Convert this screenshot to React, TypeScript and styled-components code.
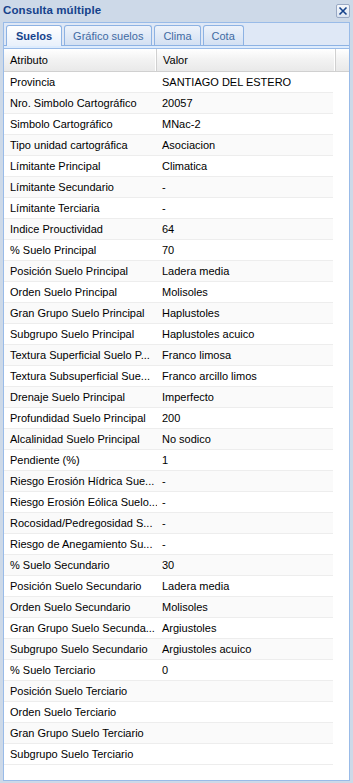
import React, { useState } from "react";
import styled, { createGlobalStyle } from "styled-components";

const GlobalStyle = createGlobalStyle`
  html, body {
    margin: 0;
    padding: 0;
    background: #cdd9e8;
  }
  body {
    font-family: "Liberation Sans", Arial, sans-serif;
  }
`;

const rows: [string, string][] = [
  ["Provincia", "SANTIAGO DEL ESTERO"],
  ["Nro. Simbolo Cartográfico", "20057"],
  ["Simbolo Cartográfico", "MNac-2"],
  ["Tipo unidad cartográfica", "Asociacion"],
  ["Límitante Principal", "Climatica"],
  ["Límitante Secundario", "-"],
  ["Límitante Terciaria", "-"],
  ["Indice Prouctividad", "64"],
  ["% Suelo Principal", "70"],
  ["Posición Suelo Principal", "Ladera media"],
  ["Orden Suelo Principal", "Molisoles"],
  ["Gran Grupo Suelo Principal", "Haplustoles"],
  ["Subgrupo Suelo Principal", "Haplustoles acuico"],
  ["Textura Superficial Suelo P...", "Franco limosa"],
  ["Textura Subsuperficial Sue...", "Franco arcillo limos"],
  ["Drenaje Suelo Principal", "Imperfecto"],
  ["Profundidad Suelo Principal", "200"],
  ["Alcalinidad Suelo Principal", "No sodico"],
  ["Pendiente (%)", "1"],
  ["Riesgo Erosión Hídrica Sue...", "-"],
  ["Riesgo Erosión Eólica Suelo...", "-"],
  ["Rocosidad/Pedregosidad S...", "-"],
  ["Riesgo de Anegamiento Su...", "-"],
  ["% Suelo Secundario", "30"],
  ["Posición Suelo Secundario", "Ladera media"],
  ["Orden Suelo Secundario", "Molisoles"],
  ["Gran Grupo Suelo Secunda...", "Argiustoles"],
  ["Subgrupo Suelo Secundario", "Argiustoles acuico"],
  ["% Suelo Terciario", "0"],
  ["Posición Suelo Terciario", ""],
  ["Orden Suelo Terciario", ""],
  ["Gran Grupo Suelo Terciario", ""],
  ["Subgrupo Suelo Terciario", ""],
];

const tabs = ["Suelos", "Gráfico suelos", "Clima", "Cota"];

const Window = styled.div`
  width: 353px;
  height: 783px;
  background: #cdd9e8;
  display: flex;
  flex-direction: column;
  box-sizing: border-box;
`;

const Header = styled.div`
  height: 22px;
  display: flex;
  align-items: center;
  justify-content: space-between;
  padding: 0 3px 0 3px;
  flex-shrink: 0;
`;

const Title = styled.span`
  font-weight: bold;
  font-size: 11.5px;
  color: #15428b;
  letter-spacing: 0.1px;
  margin-top: -2px;
`;

const CloseButton = styled.button`
  width: 14px;
  height: 14px;
  padding: 0;
  margin: 0;
  border: 1px solid #99a9c4;
  border-radius: 2px;
  background: linear-gradient(#f4f7fb, #dbe4f1);
  display: flex;
  align-items: center;
  justify-content: center;
  cursor: pointer;
`;

const Body = styled.div`
  flex: 1;
  margin: 0 3px 2px 3px;
  border: 1px solid #99bbe8;
  background: #fff;
  display: flex;
  flex-direction: column;
  overflow: hidden;
`;

const TabStrip = styled.div`
  background: #dfe8f6;
  padding: 1px 0 0 2px;
  display: flex;
  gap: 2px;
  height: 21px;
  align-items: flex-end;
`;

const Tab = styled.div<{ $active?: boolean }>`
  height: ${(p) => (p.$active ? "21px" : "20px")};
  box-sizing: border-box;
  padding: 0 ${(p) => (p.$active ? "9px" : "8px")};
  border: 1px solid #8db2e3;
  border-bottom: none;
  border-radius: 3px 3px 0 0;
  background: ${(p) =>
    p.$active
      ? "linear-gradient(#ffffff, #e8f0fb)"
      : "linear-gradient(#eef3fb, #d3e0f2)"};
  color: ${(p) => (p.$active ? "#15428b" : "#416aa3")};
  font-weight: ${(p) => (p.$active ? "bold" : "normal")};
  font-size: 11px;
  display: flex;
  align-items: center;
  cursor: pointer;
  margin-bottom: ${(p) => (p.$active ? "-1px" : "0")};
  position: relative;
`;

const StripBar = styled.div`
  height: 2px;
  background: #deecfd;
  border-top: 1px solid #8db2e3;
  border-bottom: 1px solid #99bbe8;
`;

const GridHead = styled.div`
  display: grid;
  grid-template-columns: 153px 179px 1fr;
  height: 22px;
  background: linear-gradient(#ffffff, #f2f2f2 50%, #e9e9e9);
  border-bottom: 1px solid #d0d0d0;
`;

const HeadCell = styled.div`
  font-size: 11px;
  color: #000;
  display: flex;
  align-items: center;
  padding-left: 6px;
  border-right: 1px solid #d0d0d0;
  box-shadow: inset -1px 0 0 #ffffff;
`;

const Rows = styled.div`
  width: 329px;
`;

const Row = styled.div<{ $alt: boolean }>`
  display: grid;
  grid-template-columns: 153px 1fr;
  height: 21px;
  box-sizing: border-box;
  background: ${(p) => (p.$alt ? "#fafafa" : "#ffffff")};
  border-bottom: 1px solid #ededed;
`;

const Cell = styled.div<{ $pad: number }>`
  font-size: 11px;
  color: #000;
  display: flex;
  align-items: center;
  padding-left: ${(p) => p.$pad}px;
  white-space: nowrap;
  overflow: hidden;
`;

const CloseIcon = () => (
  <svg width="10" height="10" viewBox="0 0 10 10">
    <path d="M1.5 1.5 L8.5 8.5 M8.5 1.5 L1.5 8.5" stroke="#15428b" strokeWidth="1.6" />
  </svg>
);

export default function App() {
  const [active, setActive] = useState(0);
  return (
    <>
      <GlobalStyle />
      <Window>
        <Header>
          <Title>Consulta múltiple</Title>
          <CloseButton aria-label="Cerrar">
            <CloseIcon />
          </CloseButton>
        </Header>
        <Body>
          <TabStrip>
            {tabs.map((t, i) => (
              <Tab key={t} $active={i === active} onClick={() => setActive(i)}>
                {t}
              </Tab>
            ))}
          </TabStrip>
          <StripBar />
          <GridHead>
            <HeadCell>Atributo</HeadCell>
            <HeadCell>Valor</HeadCell>
            <div />
          </GridHead>
          <Rows>
            {rows.map(([a, v], i) => (
              <Row key={a} $alt={i % 2 === 1}>
                <Cell $pad={6}>{a}</Cell>
                <Cell $pad={5}>{v}</Cell>
              </Row>
            ))}
          </Rows>
        </Body>
      </Window>
    </>
  );
}
